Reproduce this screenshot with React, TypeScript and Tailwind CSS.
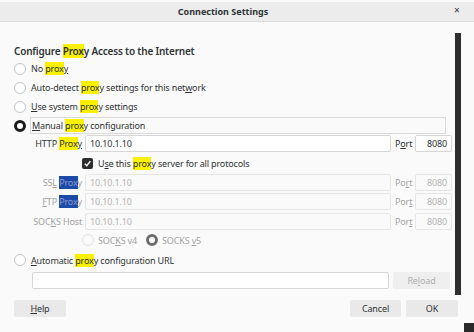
import React from "react";

const Hl = ({ children }: { children: React.ReactNode }) => (
  <span className="bg-[#fbf000]">{children}</span>
);
const HlB = ({ children }: { children: React.ReactNode }) => (
  <span className="bg-[#1d49a8] text-[#8b9ccc]">{children}</span>
);
const U = ({ children }: { children: React.ReactNode }) => (
  <span className="underline underline-offset-[1px] decoration-[0.5px]">{children}</span>
);

function Radio({ state }: { state: "off" | "on" | "offDis" | "onDis" }) {
  const cls =
    state === "on"
      ? "border-[3px] border-[#1b1b1b] bg-white"
      : state === "onDis"
      ? "border-[3px] border-[#6d6d6d] bg-white"
      : state === "offDis"
      ? "border border-[#e2e2e2] bg-[#fbfbfb]"
      : "border border-[#c4c4c4] bg-white";
  return <span className={`block w-[12px] h-[12px] rounded-full shrink-0 ${cls}`} />;
}

function Input({ value, disabled, right }: { value?: string; disabled?: boolean; right?: boolean }) {
  return (
    <div
      className={`h-[17px] flex items-center px-[4px] border rounded-[2px] ${
        disabled ? "border-[#e6e6e6] bg-[#fafafa] text-[#b4b4b4]" : "border-[#d6d6d6] bg-white text-[#2e3436]"
      } ${right ? "justify-end" : ""}`}
    >
      {value}
    </div>
  );
}

function ProxyRow({
  label,
  value,
  port,
  portLabel,
  disabled,
}: {
  label: React.ReactNode;
  value: string;
  port: string;
  portLabel: React.ReactNode;
  disabled?: boolean;
}) {
  return (
    <div className="flex items-center h-[17px]">
      <div className={`w-[52px] text-right whitespace-nowrap ${disabled ? "text-[#a2a2a2]" : ""}`}>
        <span>{label}</span>
      </div>
      <div className="ml-[3px] w-[306px]">
        <Input value={value} disabled={disabled} />
      </div>
      <div className={`ml-[4px] w-[20px] ${disabled ? "text-[#a2a2a2]" : ""}`}>
        <span>{portLabel}</span>
      </div>
      <div className="w-[37px]">
        <Input value={port} disabled={disabled} right />
      </div>
    </div>
  );
}

export default function App() {
  return (
    <div
      className="relative w-[474px] h-[332px] overflow-hidden bg-[#fafafa] text-[9px] tracking-[-0.15px] text-[#2e3436] leading-none"
      style={{ fontFamily: '"Noto Sans", sans-serif' }}
    >
      {/* title bar */}
      <div className="relative h-[22px] pt-[2px] bg-[#fafafa]">
        <div className="h-[20px] bg-[#ececec] border-b border-[#dcdcdc] flex items-center justify-center pr-[28px]">
          <span className="font-bold text-[9px] tracking-normal">Connection Settings</span>
        </div>
        <span className="absolute left-[454px] top-[5px] text-[10px] text-[#333]">×</span>
      </div>

      <div className="pl-[14px] flex flex-col">
        <div className="mt-[20px] h-[17px] flex items-center text-[10px] tracking-[-0.2px] font-semibold">
          <span>
            Configure <Hl>Prox</Hl>y Access to the Internet
          </span>
        </div>
        <div className="h-[19px] flex items-center gap-[5px]">
          <Radio state="off" />
          <span>
            No <Hl>prox</Hl>
            <U>y</U>
          </span>
        </div>
        <div className="h-[19px] flex items-center gap-[5px]">
          <Radio state="off" />
          <span>
            Auto-detect <Hl>prox</Hl>y settings for this net<U>w</U>ork
          </span>
        </div>
        <div className="h-[19px] flex items-center gap-[5px]">
          <Radio state="off" />
          <span>
            <U>U</U>se system <Hl>prox</Hl>y settings
          </span>
        </div>
        <div className="mt-[1px] h-[17px] flex items-center gap-[4px]">
          <Radio state="on" />
          <div className="w-[416px] h-[17px] border border-[#dadada] flex items-center pl-[1px]">
            <span>
              <U>M</U>anual <Hl>prox</Hl>y configuration
            </span>
          </div>
        </div>

        <div className="mt-[1px] pl-[16px]">
          <ProxyRow
            label={
              <>
                HTTP <Hl>Prox</Hl>
                <U>y</U>
              </>
            }
            value="10.10.1.10"
            port="8080"
            portLabel={
              <>
                P<U>o</U>rt
              </>
            }
          />
        </div>

        <div className="mt-[2px] h-[18px] pl-[68px] flex items-center gap-[5px]">
          <span className="w-[11px] h-[11px] rounded-[2px] bg-[#2d2d2d] flex items-center justify-center">
            <svg width="9" height="9" viewBox="0 0 10 10">
              <path d="M2 5.2 L4.2 7.4 L8.2 2.4" stroke="white" strokeWidth="1.6" fill="none" />
            </svg>
          </span>
          <span>
            U<U>s</U>e this <Hl>prox</Hl>y server for all protocols
          </span>
        </div>

        <div className="mt-[2px] pl-[16px]">
          <ProxyRow
            disabled
            label={
              <>
                SS<U>L</U> <HlB>Prox</HlB>y
              </>
            }
            value="10.10.1.10"
            port="8080"
            portLabel={
              <>
                Po<U>r</U>t
              </>
            }
          />
        </div>
        <div className="mt-[2px] pl-[16px]">
          <ProxyRow
            disabled
            label={
              <>
                <U>F</U>TP <HlB>Prox</HlB>y
              </>
            }
            value="10.10.1.10"
            port="8080"
            portLabel={
              <>
                Por<U>t</U>
              </>
            }
          />
        </div>
        <div className="mt-[3px] pl-[16px]">
          <ProxyRow
            disabled
            label={
              <>
                SOC<U>K</U>S Host
              </>
            }
            value="10.10.1.10"
            port="8080"
            portLabel={
              <>
                Por<U>t</U>
              </>
            }
          />
        </div>

        <div className="mt-[1px] h-[18px] pl-[68px] flex items-center text-[#a2a2a2]">
          <Radio state="offDis" />
          <span className="ml-[4px]">
            SOC<U>K</U>S v4
          </span>
          <span className="ml-[9px]">
            <Radio state="onDis" />
          </span>
          <span className="ml-[4px]">
            SOCKS <U>v</U>5
          </span>
        </div>

        <div className="mt-[2px] h-[18px] flex items-center gap-[5px]">
          <Radio state="off" />
          <span>
            <U>A</U>utomatic <Hl>prox</Hl>y configuration URL
          </span>
        </div>

        <div className="mt-[3px] pl-[18px] flex items-center">
          <div className="w-[357px]">
            <Input />
          </div>
          <div className="ml-[4px] w-[57px] h-[17px] rounded-[2px] bg-[#efefef] text-[#b0b0b0] flex items-center justify-center">
            <span>
              Re<U>l</U>oad
            </span>
          </div>
        </div>

        <div className="mt-[11px] flex items-center">
          <div className="w-[52px] h-[17px] rounded-[2px] bg-[#e9e9e9] flex items-center justify-center">
            <span>
              <U>H</U>elp
            </span>
          </div>
          <div className="ml-auto mr-[16px] flex gap-[5px]">
            <div className="w-[51px] h-[17px] rounded-[2px] bg-[#e9e9e9] flex items-center justify-center">
              Cancel
            </div>
            <div className="w-[52px] h-[17px] rounded-[2px] bg-[#e9e9e9] flex items-center justify-center">
              OK
            </div>
          </div>
        </div>
      </div>

      {/* overlay scrollbar */}
      <div className="absolute left-[455px] top-[33px] w-[6px] h-[262px] bg-[#2f2f2f]" />
      <div className="absolute left-[464px] top-[323px] w-[10px] h-[9px] bg-[#2a2a2a]" />
    </div>
  );
}
